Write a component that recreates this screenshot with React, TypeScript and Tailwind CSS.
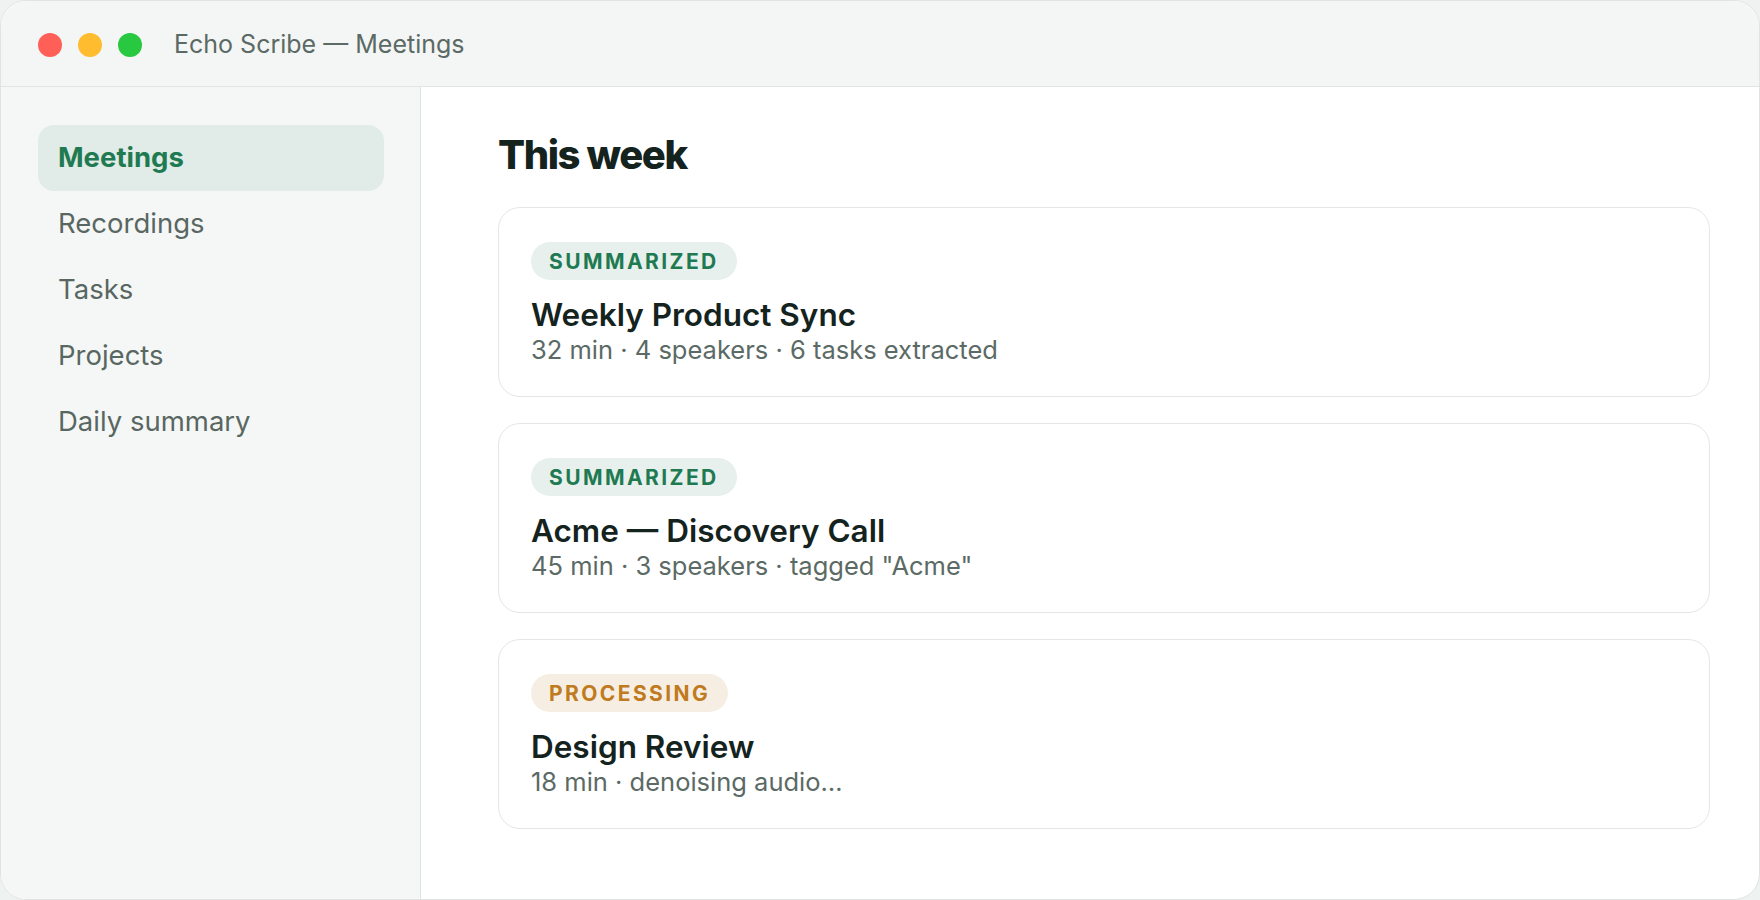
import { useState } from "react"

type Status = "summarized" | "processing"

interface Meeting {
  id: number
  title: string
  meta: string
  status: Status
}

const navItems = ["Meetings", "Recordings", "Tasks", "Projects", "Daily summary"]

const meetings: Meeting[] = [
  { id: 1, title: "Weekly Product Sync", meta: "32 min · 4 speakers · 6 tasks extracted", status: "summarized" },
  { id: 2, title: "Acme — Discovery Call", meta: "45 min · 3 speakers · tagged \"Acme\"", status: "summarized" },
  { id: 3, title: "Design Review", meta: "18 min · denoising audio…", status: "processing" },
]

const badgeStyles: Record<Status, string> = {
  summarized: "bg-[#e7f0ec] text-[#1f7a52]",
  processing: "bg-[#f6eee2] text-[#c07a20]",
}

function StatusBadge({ status }: { status: Status }) {
  return (
    <span
      className={`inline-flex h-[38px] items-center self-start rounded-full px-[18px] text-[21px] font-bold uppercase leading-none tracking-[0.115em] ${badgeStyles[status]}`}
    >
      {status}
    </span>
  )
}

function MeetingCard({ meeting }: { meeting: Meeting }) {
  return (
    <div className="flex flex-col rounded-[22px] border border-[#e3e7e5] bg-white px-8 pb-[29px] pt-[34px]">
      <StatusBadge status={meeting.status} />
      <h3 className="mt-4 text-[31.5px] font-semibold leading-[37px] text-[#14231d]">{meeting.title}</h3>
      <p className="text-[25.5px] leading-[34px] text-[#5b6a64]">{meeting.meta}</p>
    </div>
  )
}

export default function App() {
  const [active, setActive] = useState("Meetings")

  return (
    <div className="h-screen w-screen bg-[#eef2f0] font-['Inter','Liberation_Sans',sans-serif]">
      <div className="flex h-full flex-col overflow-hidden rounded-[26px] border border-[#dfe3e1] bg-white">
        {/* title bar */}
        <div className="flex h-[86px] shrink-0 items-center border-b border-[#e0e4e2] bg-[#f4f6f5] pl-[37px] pt-[2px]">
          <div className="flex gap-4">
            <span className="h-6 w-6 rounded-full bg-[#ff5f57]" />
            <span className="h-6 w-6 rounded-full bg-[#febc2e]" />
            <span className="h-6 w-6 rounded-full bg-[#28c840]" />
          </div>
          <span className="ml-8 text-[25px] text-[#5b6a64]">Echo Scribe — Meetings</span>
        </div>

        <div className="flex min-h-0 flex-1">
          {/* sidebar */}
          <aside className="w-[420px] shrink-0 border-r border-[#e0e4e2] bg-[#f5f7f6] pl-[37px] pr-[36px] pt-[38px]">
            <nav className="flex flex-col">
              {navItems.map((item) => (
                <button
                  key={item}
                  onClick={() => setActive(item)}
                  className={`flex h-[66px] items-center rounded-2xl px-5 text-left text-[27.5px] ${
                    active === item ? "bg-[#e1ebe7] font-bold text-[#1f7a52]" : "text-[#596762]"
                  }`}
                >
                  {item}
                </button>
              ))}
            </nav>
          </aside>

          {/* main */}
          <main className="flex-1 pl-[77px] pr-[49px] pt-[44px]">
            <h1 className="text-[40px] font-extrabold leading-[48px] tracking-[-0.035em] text-[#14231d]">This week</h1>
            <div className="mt-7 flex flex-col gap-[26px]">
              {meetings.map((m) => (
                <MeetingCard key={m.id} meeting={m} />
              ))}
            </div>
          </main>
        </div>
      </div>
    </div>
  )
}
